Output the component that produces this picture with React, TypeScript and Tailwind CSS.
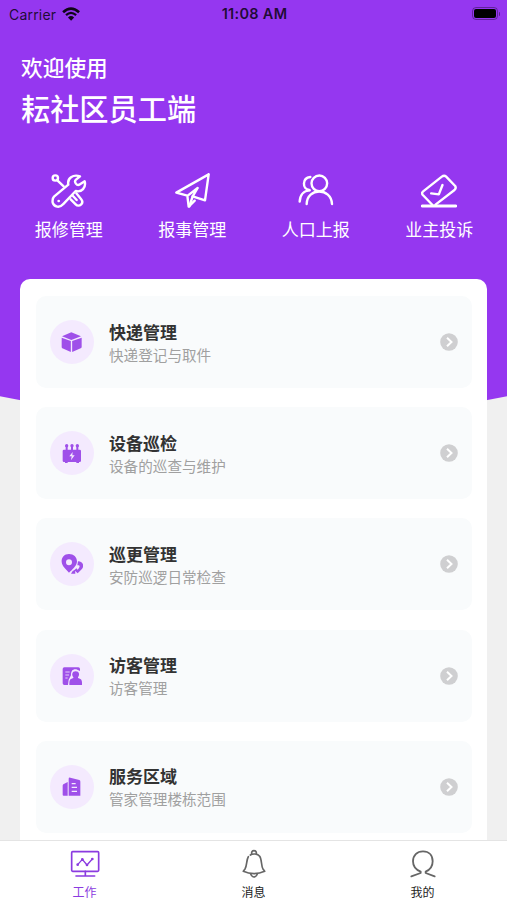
import type { ReactNode } from 'react'

interface Shortcut {
  label: string
  icon: ReactNode
}

interface MenuItem {
  title: string
  desc: string
  icon: ReactNode
}

interface TabItem {
  label: string
  icon: ReactNode
  active?: boolean
}

// 顶部快捷入口
const shortcuts: Shortcut[] = [
  {
    label: '报修管理',
    icon: (
      <svg viewBox="94 42 108 108" className="w-9 h-9" fill="none" stroke="currentColor" strokeWidth={7.2} strokeLinecap="round" strokeLinejoin="round">
        <circle cx="107" cy="57" r="8" />
        <path d="M113 64L132 82" />
        <path d="M103 113L146 77C142 58 160 45 181 52L169 62C162 68 171 83 181 76L195 67C200 86 186 101 168 96L130 136C120 148 103 144 99 131C98 123 98 118 103 113Z" />
        <path d="M170 103L184 120C195 133 178 147 168 136L153 121" />
        <path d="M160 111L171 123" />
        <circle cx="117" cy="126" r="4" fill="currentColor" stroke="none" />
      </svg>
    ),
  },
  {
    label: '报事管理',
    icon: (
      <svg viewBox="462 41 108 108" className="w-9 h-9" fill="none" stroke="currentColor" strokeWidth={7.2} strokeLinecap="round" strokeLinejoin="round">
        <path d="M566 45L469 100L502 109L506 142L524 124M566 45L555 123L518 111L533 86L504 108" />
        <path d="M518 111L508 141" />
      </svg>
    ),
  },
  {
    label: '人口上报',
    icon: (
      <svg viewBox="114 40 108 108" className="w-9 h-9" fill="none" stroke="currentColor" strokeWidth={7.2} strokeLinecap="round" strokeLinejoin="round">
        <circle cx="178" cy="71" r="23.500" />
        <path d="M140 133C141 83 214 83 216 133" />
        <path d="M151 52C126 55 126 88 148 91" />
        <path d="M119 126C120 105 132 93 149 92" />
      </svg>
    ),
  },
  {
    label: '业主投诉',
    icon: (
      <svg viewBox="484.5 40 108 108" className="w-9 h-9" fill="none" stroke="currentColor" strokeWidth={7.2} strokeLinecap="round" strokeLinejoin="round">
        <path d="M519 136L490 106Q485 100 491 95L547 51Q554 45 560 51L587 79Q591 85 585 91L528 135" />
        <path d="M515 101L538 104L549 76" />
        <path d="M488 139H589" strokeWidth={9} />
      </svg>
    ),
  },
]

// 功能列表
const menus: MenuItem[] = [
  {
    title: '快递管理',
    desc: '快递登记与取件',
    icon: (
      <svg viewBox="184 184 66 66" className="w-[22px] h-[22px]" fill="currentColor">
        <path d="M215 188L244 200L215 211L187 200Z" />
        <path d="M186 204L213.500 214V247L188 236Q186 235 186 232Z" />
        <path d="M246 204L217.500 214V247L243 236Q246 235 246 232Z" />
      </svg>
    ),
  },
  {
    title: '设备巡检',
    desc: '设备的巡查与维护',
    icon: (
      <svg viewBox="184 518 66 66" className="w-[22px] h-[22px]" fill="currentColor">
        <circle cx="201" cy="529" r="5" />
        <circle cx="217" cy="529" r="5" />
        <circle cx="233" cy="529" r="5" />
        <path d="M198 529h6v15h-6zM214 529h6v15h-6zM230 529h6v15h-6z" />
        <path d="M193 541H240Q244 541 244 545V574Q244 578 240 578H238V581H230V578H204V581H196V578H193Q189 578 189 574V545Q189 541 193 541Z" />
        <path d="M219 548L209 561H216L214 573L225 558H218Z" fill="#f4eafe" />
      </svg>
    ),
  },
  {
    title: '巡更管理',
    desc: '安防巡逻日常检查',
    icon: (
      <svg viewBox="64 71 66 66" className="w-[22px] h-[22px]" fill="currentColor">
        <path fillRule="evenodd" d="M88 74C74 74 65 84 66 98C67 111 80 121 88 130C97 121 111 110 112 97C112 83 102 74 88 74ZM88 90A9 9 0 1 1 88 108A9 9 0 1 1 88 90Z" />
        <path d="M115 96C132 96 134 112 126 120L114 132L104 123L110 117L114 121L118 116C122 110 119 106 113 108Z" />
        <path d="M99 125L106 121L107 133H94Z" />
      </svg>
    ),
  },
  {
    title: '访客管理',
    desc: '访客管理',
    icon: (
      <svg viewBox="64 77 66 66" className="w-[22px] h-[22px]" fill="currentColor">
        <path d="M74 84H116Q121 84 121 89V95L113 91C102 87 93 93 94 108L87 121L85 137H74Q69 137 69 132V89Q69 84 74 84Z" />
        <path d="M77 98H90M77 107H88M77 116H84" stroke="#f4eafe" strokeWidth="2.500" />
        <path d="M108 96C97 96 95 107 101 114V116C92 118 89 122 89 130V137H127V130C127 122 124 118 115 116V114C121 107 119 96 108 96Z" />
      </svg>
    ),
  },
  {
    title: '服务区域',
    desc: '管家管理楼栋范围',
    icon: (
      <svg viewBox="184 109 66 66" className="w-[22px] h-[22px]" fill="currentColor">
        <path d="M204 127V168H192Q189 168 189 165V138Q189 136 191 134Z" />
        <path d="M207 168V118Q207 113 212 114L239 121Q242 122 242 126V168Z" />
        <path d="M216 132H228M216 143H232M216 155H232" stroke="#f4eafe" strokeWidth="3.500" />
      </svg>
    ),
  },
]

const tabs: TabItem[] = [
  {
    label: '工作',
    active: true,
    icon: (
      <svg viewBox="210 325 90 90" className="w-[30px] h-[30px]" fill="none" stroke="currentColor" strokeWidth={5} strokeLinecap="round" strokeLinejoin="round">
        <rect x="215" y="333" width="81" height="59" rx="3" />
        <path d="M256 392V405M228 406H284" />
        <path d="M233 372L247 356L261 373L277 355" strokeWidth={4} />
        <g fill="currentColor" stroke="none">
          <circle cx="233" cy="372" r="4" />
          <circle cx="247" cy="356" r="4" />
          <circle cx="261" cy="373" r="4" />
          <circle cx="277" cy="355" r="4" />
        </g>
      </svg>
    ),
  },
  {
    label: '消息',
    icon: (
      <svg viewBox="57 55 90 90" className="w-[30px] h-[30px]" fill="none" stroke="currentColor" strokeWidth={5} strokeLinecap="round" strokeLinejoin="round">
        <path d="M85 78C79 87 81 106 75 115L70 122Q85 129 102 129Q119 129 134 122L129 115C123 106 126 86 119 77C113 69 99 68 91 73" />
        <path d="M95 70Q94 60 102 60Q110 60 109 70" />
        <path d="M92 130Q96 139 102 139Q108 139 112 130" />
      </svg>
    ),
  },
  {
    label: '我的',
    icon: (
      <svg viewBox="563 55 90 90" className="w-[30px] h-[30px]" fill="none" stroke="currentColor" strokeWidth={5.5} strokeLinecap="round" strokeLinejoin="round">
        <path d="M573 137L601 127V123C585 117 578 107 578 92C578 74 590 62 608 62C626 62 637 74 637 92C637 107 631 117 616 123V127L643 137" />
      </svg>
    ),
  },
]

function StatusBar() {
  return (
    <div className="grid grid-cols-3 items-center h-7 pl-[9px] pr-[7px] text-black/80 font-['Inter','Liberation_Sans',sans-serif]">
      <div className="flex items-center gap-[6px] text-[14px]">
        <span className="tracking-[0.2px]">Carrier</span>
        <svg viewBox="186 17 56 43" className="w-[18.500px] h-[14px] text-black/90" fill="none" stroke="currentColor">
          <path d="M189 33Q213 11 238 33" strokeWidth="8" />
          <path d="M198 42Q213 28 229 42" strokeWidth="7" />
          <path d="M204 49Q213 41 223 49L213.500 59Z" fill="currentColor" stroke="none" />
        </svg>
      </div>
      <div className="text-center text-[14.500px] font-semibold tracking-[0.3px] whitespace-nowrap">11:08 AM</div>
      <div className="flex items-center justify-end gap-px pb-px">
        <div className="w-[26px] h-[13px] p-px rounded-[4px] border border-black/35">
          <div className="h-full rounded-[2px] bg-black" />
        </div>
        <div className="w-[1.500px] h-1 rounded-r bg-black/40" />
      </div>
    </div>
  )
}

export default function App() {
  return (
    <div className="relative flex flex-col w-[507px] h-[900px] overflow-hidden bg-[#f0f0f0] font-['Liberation_Sans','Noto_Sans_CJK_SC',sans-serif]">
      {/* 紫色弧形背景 */}
      <div className="absolute inset-x-0 top-0 h-[430px] bg-[#9537f0] [clip-path:ellipse(752px_421px_at_50%_0)]" />

      <div className="relative flex flex-col flex-1 min-h-0">
        <StatusBar />

        <header className="pl-[21px] pt-[25px] text-white font-medium">
          <div className="text-[21.700px] leading-[32px]">欢迎使用</div>
          <h1 className="mt-[4px] text-[29.200px] leading-[42px]">耘社区员工端</h1>
        </header>

        <nav className="grid grid-cols-4 pl-[7px] pr-[6px] mt-[42px] text-white">
          {shortcuts.map((item) => (
            <div key={item.label} className="flex flex-col items-center">
              {item.icon}
              <span className="mt-[10px] text-[17px] leading-6">{item.label}</span>
            </div>
          ))}
        </nav>

        {/* 列表面板 */}
        <main className="flex-1 min-h-0 mt-9 mx-5 pt-[17px] pl-4 pr-[15px] overflow-hidden rounded-t-[10px] bg-white">
          <div className="flex flex-col gap-[19.200px]">
            {menus.map((item) => (
              <div key={item.title} className="flex items-center shrink-0 h-[92px] pl-[14px] pr-[14px] rounded-[10px] bg-[#f9fbfc]">
                <div className="flex items-center justify-center w-11 h-11 rounded-full bg-[#f4eafe] text-[#9f50e9]">
                  {item.icon}
                </div>
                <div className="flex-1 ml-[15px] pt-1">
                  <div className="text-[17px] leading-[23px] font-bold text-[#333]">{item.title}</div>
                  <div className="text-[14.600px] leading-[22px] text-[#a0a0a0]">{item.desc}</div>
                </div>
                <svg viewBox="0 0 18 18" className="w-[18px] h-[18px]">
                  <circle cx="9" cy="9" r="8.800" fill="#cfcfd1" />
                  <path d="M7 4.700L11.500 9L7 13.300" fill="none" stroke="#fff" strokeWidth="2" />
                </svg>
              </div>
            ))}
          </div>
        </main>
      </div>

      {/* 底部导航 */}
      <footer className="relative grid grid-cols-3 h-[60px] pt-[7.500px] border-t border-[#e4e4e4] bg-white">
        {tabs.map((tab) => (
          <div key={tab.label} className={tab.active ? 'flex flex-col items-center text-[#8b3be0]' : 'flex flex-col items-center text-[#666]'}>
            {tab.icon}
            <span className={tab.active ? 'mt-[6px] text-[12px] leading-4' : 'mt-[6px] text-[12px] leading-4 text-[#222]'}>{tab.label}</span>
          </div>
        ))}
      </footer>
    </div>
  )
}
